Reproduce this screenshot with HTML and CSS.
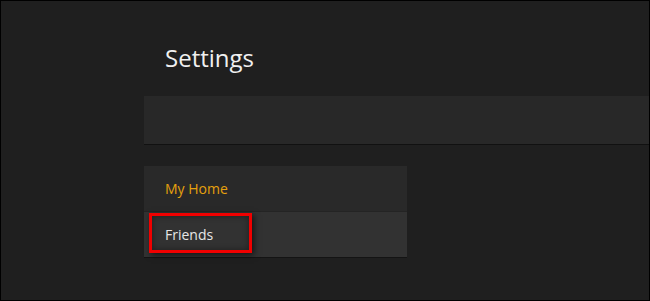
FILE: index.html
```html
<!DOCTYPE html>
<html>
<head>
<meta charset="utf-8">
<link rel="stylesheet" href="styles.css">
</head>
<body>
<div class="frame">
  <div class="content">
    <h1 class="title">Settings</h1>
    <div class="toolbar"></div>
    <ul class="menu">
      <li class="item active">My Home</li>
      <li class="item selected">Friends<span class="highlight"></span></li>
    </ul>
  </div>
</div>
</body>
</html>
```
FILE: styles.css
```css
html, body {
  margin: 0;
  padding: 0;
  background: #1f1f1f;
}
.frame {
  box-sizing: border-box;
  width: 650px;
  height: 301px;
  border: 1px solid #000;
  background: #1f1f1f;
  font-family: "Open Sans", "DejaVu Sans", sans-serif;
  overflow: hidden;
}
.content {
  padding-left: 143px;
}
.title {
  margin: 0;
  padding: 40px 0 0 21px;
  font-size: 24px;
  font-weight: 400;
  line-height: 33px;
  height: 55px;
  color: #f0f0f0;
}
.toolbar {
  height: 48px;
  background: #282828;
  border-bottom: 1px solid #111;
}
.menu {
  list-style: none;
  margin: 21px 0 0 0;
  padding: 0;
  width: 263px;
}
.item {
  position: relative;
  height: 45px;
  line-height: 45px;
  padding-left: 21px;
  font-size: 14px;
  background: #292929;
  border-bottom: 1px solid #1c1c1c;
}
.item.active {
  color: #e5a00d;
  border-bottom-color: #242424;
}
.item.selected {
  color: #e6e6e6;
  background: #323232;
  border-bottom-color: #141414;
}
.highlight {
  position: absolute;
  left: 5px;
  top: 1px;
  width: 97px;
  height: 34px;
  border: 3px solid #f00000;
  box-shadow: 2px 2px 6px rgba(0,0,0,0.6), inset 0 0 6px rgba(0,0,0,0.4);
}
```
